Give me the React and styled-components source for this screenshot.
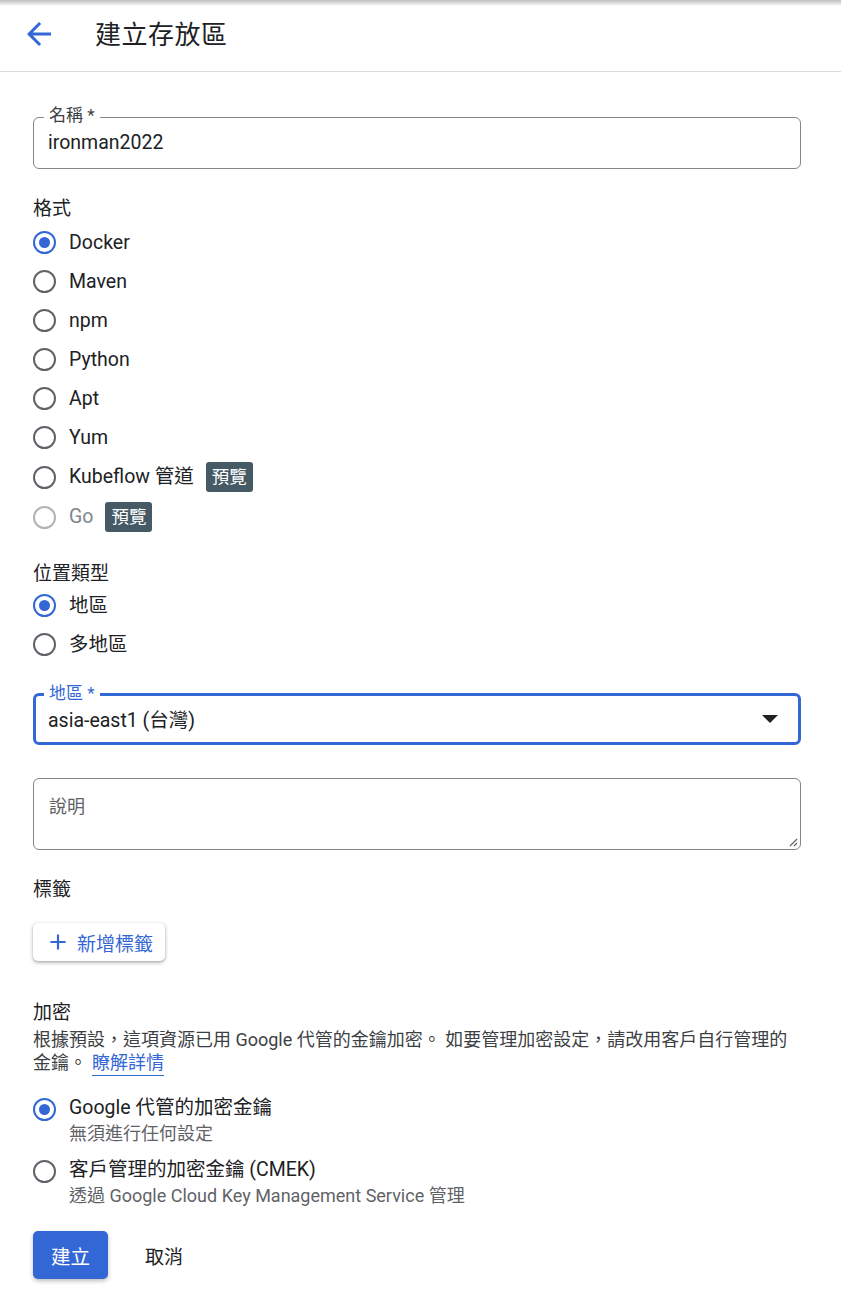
import React from "react";
import styled, { createGlobalStyle } from "styled-components";

const GlobalStyle = createGlobalStyle`
  html, body {
    margin: 0;
    padding: 0;
    background: #fff;
  }
  body {
    font-family: Roboto, "Noto Sans CJK TC", "Noto Sans", sans-serif;
    color: #202124;
  }
  * { box-sizing: border-box; }
`;

const formats = [
  { name: "Docker", checked: true },
  { name: "Maven" },
  { name: "npm" },
  { name: "Python" },
  { name: "Apt" },
  { name: "Yum" },
  { name: "Kubeflow 管道", preview: true },
  { name: "Go", preview: true, disabled: true },
];

const App = () => {
  return (
    <Page>
      <GlobalStyle />
      <TopShadow />
      <Header>
        <BackButton aria-label="back">
          <svg width="36" height="36" viewBox="0 0 24 24">
            <path
              d="M20 11H7.83l5.59-5.59L12 4l-8 8 8 8 1.41-1.41L7.83 13H20v-2z"
              fill="#3367d6"
            />
          </svg>
        </BackButton>
        <Title>建立存放區</Title>
      </Header>

      <Form>
        <Field>
          <FieldLabel>名稱 *</FieldLabel>
          <FieldValue>ironman2022</FieldValue>
        </Field>

        <Section $top={28}>
          <SectionTitle>格式</SectionTitle>
          <RadioList>
            {formats.map((f) => (
              <RadioRow key={f.name} $disabled={f.disabled} $tall={f.preview}>
                <Radio $checked={f.checked} $disabled={f.disabled} />
                <RadioText>{f.name}</RadioText>
                {f.preview && <Badge>預覽</Badge>}
              </RadioRow>
            ))}
          </RadioList>
        </Section>

        <Section $top={25}>
          <SectionTitle>位置類型</SectionTitle>
          <RadioList $top={0}>
            <RadioRow>
              <Radio $checked />
              <RadioText>地區</RadioText>
            </RadioRow>
            <RadioRow>
              <Radio />
              <RadioText>多地區</RadioText>
            </RadioRow>
          </RadioList>
        </Section>

        <Field $focused $top={29}>
          <FieldLabel $focused>地區 *</FieldLabel>
          <FieldValue>asia-east1 (台灣)</FieldValue>
          <Caret />
        </Field>

        <TextArea>
          <Placeholder>說明</Placeholder>
          <Grip>
            <svg width="12" height="12" viewBox="0 0 12 12">
              <path d="M11 4 L4 11 M11 8 L8 11" stroke="#5f6368" strokeWidth="1.2" />
            </svg>
          </Grip>
        </TextArea>

        <Section $top={28}>
          <SectionTitle>標籤</SectionTitle>
          <AddButton>
            <svg width="26" height="26" viewBox="0 0 24 24">
              <path d="M19 13h-6v6h-2v-6H5v-2h6V5h2v6h6v2z" fill="#3367d6" />
            </svg>
            新增標籤
          </AddButton>
        </Section>

        <Section $top={40}>
          <SectionTitle>加密</SectionTitle>
          <Hint>
            根據預設，這項資源已用 Google 代管的金鑰加密。 如要管理加密設定，請改用客戶自行管理的金鑰。
            <HintLink href="#">瞭解詳情</HintLink>
          </Hint>
          <KeyList>
            <KeyRow>
              <Radio $checked />
              <KeyText>
                <RadioText>Google 代管的加密金鑰</RadioText>
                <SubText>無須進行任何設定</SubText>
              </KeyText>
            </KeyRow>
            <KeyRow>
              <Radio />
              <KeyText>
                <RadioText>客戶管理的加密金鑰 (CMEK)</RadioText>
                <SubText>透過 Google Cloud Key Management Service 管理</SubText>
              </KeyText>
            </KeyRow>
          </KeyList>
        </Section>

        <Actions>
          <PrimaryButton>建立</PrimaryButton>
          <TextButton>取消</TextButton>
        </Actions>
      </Form>
    </Page>
  );
};

export default App;

const Page = styled.div`
  width: 841px;
  min-height: 1305px;
  position: relative;
  background: #fff;
`;

const TopShadow = styled.div`
  position: absolute;
  top: 0;
  left: 0;
  right: 0;
  height: 6px;
  background: linear-gradient(#bdbdbd, rgba(255, 255, 255, 0));
`;

const Header = styled.header`
  height: 72px;
  display: flex;
  align-items: center;
  padding: 0 0 6px 21px;
  border-bottom: 1px solid #dadce0;
`;

const BackButton = styled.div`
  width: 36px;
  height: 36px;
  display: flex;
  margin-top: 2px;
`;

const Title = styled.h1`
  margin: 0 0 0 38px;
  font-size: 26px;
  font-weight: 400;
  color: #202124;
  letter-spacing: 0.5px;
`;

const Form = styled.div`
  padding: 45px 40px 0 33px;
  display: flex;
  flex-direction: column;
`;

const Field = styled.div`
  position: relative;
  height: 52px;
  margin-top: ${(p) => p.$top || 0}px;
  border: ${(p) => (p.$focused ? "3px solid #3367d6" : "1px solid #80868b")};
  border-radius: 6px;
  display: flex;
  align-items: center;
  padding-left: ${(p) => (p.$focused ? 12 : 14)}px;
`;

const FieldLabel = styled.span`
  position: absolute;
  top: -12px;
  left: ${(p) => (p.$focused ? 8 : 10)}px;
  padding: 0 5px;
  background: #fff;
  font-size: 17px;
  line-height: 19px;
  color: ${(p) => (p.$focused ? "#3367d6" : "#3c4043")};
`;

const FieldValue = styled.span`
  font-size: 19.5px;
  color: #202124;
  margin-top: -2px;
`;

const Caret = styled.span`
  position: absolute;
  right: 20px;
  top: 19px;
  width: 0;
  height: 0;
  border-left: 8px solid transparent;
  border-right: 8px solid transparent;
  border-top: 8px solid #202124;
`;

const Section = styled.div`
  margin-top: ${(p) => p.$top || 0}px;
  display: flex;
  flex-direction: column;
  align-items: flex-start;
`;

const SectionTitle = styled.div`
  font-size: 19px;
  line-height: 24px;
  color: #202124;
`;

const RadioList = styled.div`
  display: flex;
  flex-direction: column;
  margin-top: ${(p) => (p.$top ?? 2)}px;
`;

const RadioRow = styled.label`
  display: flex;
  align-items: center;
  height: ${(p) => (p.$tall ? 40 : 39)}px;
  color: ${(p) => (p.$disabled ? "#80868b" : "#202124")};
`;

const Radio = styled.span`
  width: 23px;
  height: 23px;
  flex-shrink: 0;
  border-radius: 50%;
  border: 2.5px solid
    ${(p) => (p.$checked ? "#3367d6" : p.$disabled ? "#b0b3b7" : "#5f6368")};
  display: flex;
  align-items: center;
  justify-content: center;
  margin-right: 13px;
  &::after {
    content: "";
    width: 11px;
    height: 11px;
    border-radius: 50%;
    background: ${(p) => (p.$checked ? "#3367d6" : "transparent")};
  }
`;

const RadioText = styled.span`
  font-size: 19.5px;
  line-height: 24px;
`;

const Badge = styled.span`
  margin-left: 12px;
  background: #455a64;
  color: #fff;
  border-radius: 3px;
  font-size: 17.5px;
  line-height: 30px;
  padding: 0 6px;
`;

const TextArea = styled.div`
  position: relative;
  margin-top: 33px;
  height: 72px;
  border: 1px solid #80868b;
  border-radius: 6px;
  padding: 13px 15px;
`;

const Placeholder = styled.span`
  font-size: 18px;
  color: #5f6368;
`;

const Grip = styled.span`
  position: absolute;
  right: 2px;
  bottom: 2px;
  display: flex;
`;

const AddButton = styled.button`
  margin-top: 21px;
  height: 38px;
  padding: 0 12px 0 12px;
  display: flex;
  align-items: center;
  gap: 6px;
  border: none;
  border-radius: 5px;
  background: #fff;
  box-shadow: 0 1px 3px rgba(60, 64, 67, 0.35), 0 2px 4px rgba(60, 64, 67, 0.2);
  font-family: inherit;
  font-size: 19px;
  color: #3367d6;
`;

const Hint = styled.p`
  margin: 3px 0 0;
  font-size: 18px;
  line-height: 23px;
  color: #3c4043;
  max-width: 768px;
`;

const HintLink = styled.a`
  color: #3367d6;
  text-decoration: underline;
  text-decoration-thickness: 1px;
  text-underline-offset: 6px;
  margin-left: 5px;
`;

const KeyList = styled.div`
  display: flex;
  flex-direction: column;
  gap: 15px;
  margin-top: 24px;
`;

const KeyRow = styled.label`
  display: flex;
  align-items: flex-start;
  color: #202124;
`;

const KeyText = styled.div`
  display: flex;
  flex-direction: column;
  margin-top: -2px;
`;

const SubText = styled.span`
  font-size: 18px;
  line-height: 22px;
  color: #5f6368;
  margin-top: 3px;
`;

const Actions = styled.div`
  margin-top: 24px;
  display: flex;
  align-items: center;
  gap: 14px;
`;

const PrimaryButton = styled.button`
  height: 48px;
  width: 75px;
  border: none;
  border-radius: 5px;
  background: #3367d6;
  color: #fff;
  font-family: inherit;
  font-size: 19.5px;
  box-shadow: 0 2px 4px rgba(60, 64, 67, 0.35);
`;

const TextButton = styled.button`
  height: 48px;
  padding: 0 23px;
  border: none;
  background: transparent;
  color: #202124;
  font-family: inherit;
  font-size: 19px;
`;
